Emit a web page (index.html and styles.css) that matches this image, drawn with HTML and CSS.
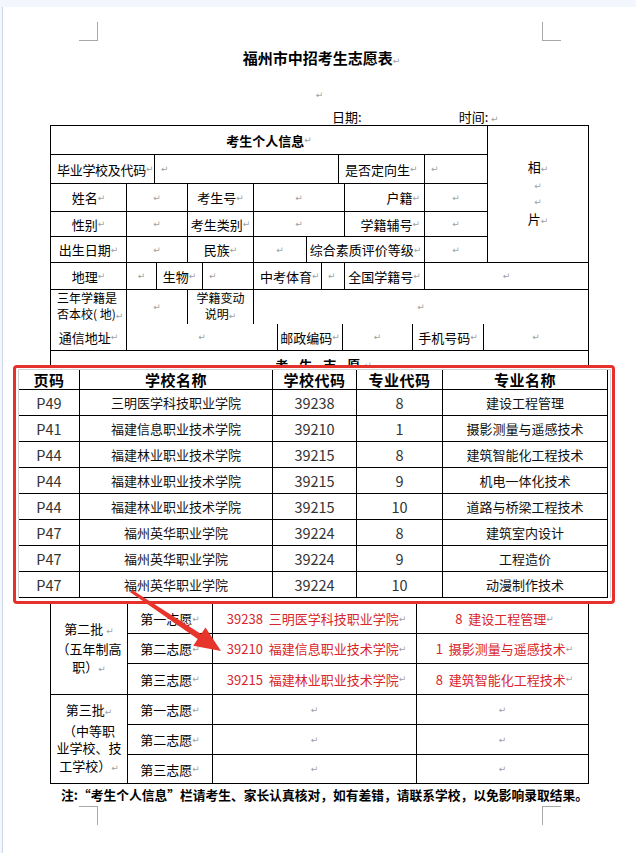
FILE: index.html
```html
<!DOCTYPE html>
<html lang="zh-CN">
<head>
<meta charset="utf-8">
<title>福州市中招考生志愿表</title>
<link rel="stylesheet" href="styles.css">
</head>
<body>
<div class="page">
  <span class="mark tl"></span><span class="mark tr"></span>
  <span class="mark bl"></span><span class="mark br"></span>

  <h1 class="title">福州市中招考生志愿表<span class="pm">↵</span></h1>
  <p class="blank"><span class="pm">↵</span></p>
  <p class="dateline"><span>日期:</span><span class="time">时间:<span class="pm"> ↵</span></span></p>

  <div class="info">
    <div class="top">
      <div class="left">
        <div class="c head">考生个人信息<span class="pm">↵</span></div>
        <div class="row r-school">
          <div class="c l tight">毕业学校及代码<span class="pm">↵</span></div>
          <div class="c l"><span class="pm">↵</span></div>
          <div class="c l">是否定向生<span class="pm">↵</span></div>
          <div class="c l"><span class="pm">↵</span></div>
        </div>
        <div class="row r-name">
          <div class="c">姓名<span class="pm">↵</span></div>
          <div class="c"><span class="pm">↵</span></div>
          <div class="c">考生号<span class="pm">↵</span></div>
          <div class="c"><span class="pm">↵</span></div>
          <div class="c r">户籍<span class="pm">↵</span></div>
          <div class="c"><span class="pm">↵</span></div>
        </div>
        <div class="row r-sex">
          <div class="c">性别<span class="pm">↵</span></div>
          <div class="c"><span class="pm">↵</span></div>
          <div class="c">考生类别<span class="pm">↵</span></div>
          <div class="c"><span class="pm">↵</span></div>
          <div class="c r">学籍辅号<span class="pm">↵</span></div>
          <div class="c"><span class="pm">↵</span></div>
        </div>
        <div class="row r-birth">
          <div class="c">出生日期<span class="pm">↵</span></div>
          <div class="c"><span class="pm">↵</span></div>
          <div class="c">民族<span class="pm">↵</span></div>
          <div class="c"><span class="pm">↵</span></div>
          <div class="c">综合素质评价等级<span class="pm">↵</span></div>
          <div class="c"><span class="pm">↵</span></div>
        </div>
      </div>
      <div class="c photo">
        <span>相<span class="pm">↵</span></span>
        <span class="pm">↵</span>
        <span class="pm">↵</span>
        <span>片<span class="pm">↵</span></span>
      </div>
    </div>
    <div class="row r-geo">
      <div class="c">地理<span class="pm">↵</span></div>
      <div class="c"><span class="pm">↵</span></div>
      <div class="c">生物<span class="pm">↵</span></div>
      <div class="c l"><span class="pm">↵</span></div>
      <div class="c l">中考体育<span class="pm">↵</span></div>
      <div class="c l"><span class="pm">↵</span></div>
      <div class="c">全国学籍号<span class="pm">↵</span></div>
      <div class="c"><span class="pm">↵</span></div>
    </div>
    <div class="row r-three">
      <div class="c l two"><span class="txt">三年学籍是<br>否本校( 地)<span class="pm">↵</span></span></div>
      <div class="c"><span class="pm">↵</span></div>
      <div class="c two"><span class="txt">学籍变动<br>说明<span class="pm">↵</span></span></div>
      <div class="c"><span class="pm">↵</span></div>
    </div>
    <div class="row r-addr">
      <div class="c">通信地址<span class="pm">↵</span></div>
      <div class="c"><span class="pm">↵</span></div>
      <div class="c">邮政编码<span class="pm">↵</span></div>
      <div class="c"><span class="pm">↵</span></div>
      <div class="c">手机号码<span class="pm">↵</span></div>
      <div class="c"><span class="pm">↵</span></div>
    </div>
    <div class="c wish">考 生 志 愿<span class="pm">↵</span></div>
    <div class="batch covered">
      <div class="c"></div><div class="c"></div><div class="c"></div><div class="c"></div>
      <div class="c"></div><div class="c"></div><div class="c"></div><div class="c"></div>
      <div class="c"></div><div class="c"></div><div class="c"></div><div class="c"></div>
    </div>
    <div class="batch b2">
      <div class="c lab"><span class="txt">第二批 <span class="pm">↵</span><br>（五年制高<br>职）<span class="pm">↵</span></span></div>
      <div class="c">第一志愿<span class="pm">↵</span></div>
      <div class="c red">39238&nbsp; 三明医学科技职业学院<span class="pm">↵</span></div>
      <div class="c red">8&nbsp; 建设工程管理<span class="pm">↵</span></div>
      <div class="c">第二志愿<span class="pm">↵</span></div>
      <div class="c red">39210&nbsp; 福建信息职业技术学院<span class="pm">↵</span></div>
      <div class="c red">1&nbsp; 摄影测量与遥感技术<span class="pm">↵</span></div>
      <div class="c">第三志愿<span class="pm">↵</span></div>
      <div class="c red">39215&nbsp; 福建林业职业技术学院<span class="pm">↵</span></div>
      <div class="c red">8&nbsp; 建筑智能化工程技术<span class="pm">↵</span></div>
    </div>
    <div class="batch b3">
      <div class="c lab"><span class="txt">第三批<span class="pm">↵</span><br>（中等职<br>业学校、技<br>工学校）<span class="pm">↵</span></span></div>
      <div class="c">第一志愿<span class="pm">↵</span></div>
      <div class="c"><span class="pm">↵</span></div>
      <div class="c"><span class="pm">↵</span></div>
      <div class="c">第二志愿<span class="pm">↵</span></div>
      <div class="c"><span class="pm">↵</span></div>
      <div class="c"><span class="pm">↵</span></div>
      <div class="c">第三志愿<span class="pm">↵</span></div>
      <div class="c"><span class="pm">↵</span></div>
      <div class="c"><span class="pm">↵</span></div>
    </div>
  </div>

  <p class="note">注:“考生个人信息”栏请考生、家长认真核对，如有差错，请联系学校，以免影响录取结果。</p>

  <div class="shot">
    <div class="sheet">
      <div class="grid">
        <div class="h">页码</div><div class="h">学校名称</div><div class="h">学校代码</div><div class="h">专业代码</div><div class="h">专业名称</div>
        <div class="n">P49</div><div class="t">三明医学科技职业学院</div><div class="n">39238</div><div class="n">8</div><div class="t">建设工程管理</div>
        <div class="n">P41</div><div class="t">福建信息职业技术学院</div><div class="n">39210</div><div class="n">1</div><div class="t">摄影测量与遥感技术</div>
        <div class="n">P44</div><div class="t">福建林业职业技术学院</div><div class="n">39215</div><div class="n">8</div><div class="t">建筑智能化工程技术</div>
        <div class="n">P44</div><div class="t">福建林业职业技术学院</div><div class="n">39215</div><div class="n">9</div><div class="t">机电一体化技术</div>
        <div class="n">P44</div><div class="t">福建林业职业技术学院</div><div class="n">39215</div><div class="n">10</div><div class="t">道路与桥梁工程技术</div>
        <div class="n">P47</div><div class="t">福州英华职业学院</div><div class="n">39224</div><div class="n">8</div><div class="t">建筑室内设计</div>
        <div class="n">P47</div><div class="t">福州英华职业学院</div><div class="n">39224</div><div class="n">9</div><div class="t">工程造价</div>
        <div class="n">P47</div><div class="t">福州英华职业学院</div><div class="n">39224</div><div class="n">10</div><div class="t">动漫制作技术</div>
      </div>
    </div>
  </div>
</div>

<svg class="arrow" width="636" height="853" viewBox="0 0 636 853" aria-hidden="true">
  <polygon points="131.8,589.8 201.1,634.1 205.5,627.4 221,651 193.3,645.8 197.7,639.1 130.2,592.2" fill="#e8352c"/>
</svg>
</body>
</html>
```

FILE: styles.css
```css
html, body {
  margin: 0;
  padding: 0;
}

body {
  background: #f3f6fc;
  font-family: "Noto Sans CJK SC", "Noto Sans", sans-serif;
  color: #000;
  position: relative;
  width: 636px;
  height: 853px;
  overflow: hidden;
}

.page {
  position: relative;
  margin: 7px 0 0 2px;
  border-left: 1px solid #cdd6e6;
  background: #fff;
  height: 846px;
}

.mark {
  position: absolute;
  width: 18px;
  height: 18px;
  border: 0 solid #a8a8a8;
}
.mark.tl { left: 76px; top: 15px; border-right-width: 1px; border-bottom-width: 1px; }
.mark.tr { left: 539px; top: 15px; border-left-width: 1px; border-bottom-width: 1px; }
.mark.bl { left: 76px; top: 799px; border-right-width: 1px; border-top-width: 1px; }
.mark.br { left: 539px; top: 799px; border-left-width: 1px; border-top-width: 1px; }

.pm {
  color: #a0a0a0;
  font-family: "DejaVu Sans", sans-serif;
  font-size: 9px;
  font-weight: 400;
  letter-spacing: 0;
}

.title {
  margin: 0 0 0 96px;
  padding-top: 41px;
  width: 445px;
  height: 20px;
  line-height: 20px;
  text-align: center;
  font-size: 15px;
  font-weight: 700;
}

.blank {
  margin: 13px 0 0 94px;
  width: 445px;
  height: 20px;
  line-height: 20px;
  text-align: center;
}

.dateline {
  margin: 8px 0 0 329px;
  height: 16px;
  line-height: 16px;
  font-size: 13px;
  display: flex;
}
.dateline .time { margin-left: 97px; }

.info {
  margin-left: 47px;
  width: 539px;
  box-sizing: border-box;
  padding: 1px;
  background: #000;
  display: flex;
  flex-direction: column;
  gap: 1px;
}

.c {
  background: #fff;
  display: flex;
  align-items: center;
  justify-content: center;
  font-size: 13px;
  white-space: nowrap;
}
.c.l { justify-content: flex-start; padding-left: 6px; }
.c.l.tight { padding-left: 6px; letter-spacing: -0.3px; }
.c.r { justify-content: flex-end; padding-right: 4px; }
.txt { display: block; }

.top {
  display: grid;
  grid-template-columns: 436px 100px;
  gap: 1px;
}
.left {
  display: flex;
  flex-direction: column;
  gap: 1px;
}
.head { height: 28px; font-weight: 700; }

.row { display: grid; gap: 1px; }
.r-school { grid-template-columns: 103px 183px 85px 62px; height: 28px; }
.r-name { grid-template-columns: 75px 60px 65px 90px 79px 62px; height: 27px; }
.r-sex { grid-template-columns: 75px 60px 65px 90px 79px 62px; height: 24px; }
.r-birth { grid-template-columns: 75px 60px 65px 52px 117px 62px; height: 25px; }
.r-geo { grid-template-columns: 75px 29px 45px 50px 67px 22px 79px 163px; height: 26px; }
.r-geo .c.l { padding-left: 6px; }
.r-three { grid-template-columns: 75px 60px 65px 334px; height: 33px; }
.r-addr { grid-template-columns: 75px 150px 64px 69px 70px 104px; height: 26px; }

.two {
  line-height: 15.5px;
  font-size: 12px;
  text-align: center;
}
.c.l.two { text-align: left; padding-left: 6px; }

.photo {
  flex-direction: column;
  line-height: 16.5px;
}

.wish {
  height: 27px;
  font-weight: 700;
  letter-spacing: 4px;
  padding-left: 8px;
}

.batch {
  display: grid;
  grid-template-columns: 76px 84px 203px 171px;
  gap: 1px;
}
.batch .lab {
  grid-row: span 3;
  text-align: center;
  line-height: 17.5px;
}
.covered { grid-template-rows: 74px 74px 74px; }
.b2 { grid-template-rows: 29px 29px 30px; }
.b3 { grid-template-rows: 29px 29px 28px; }
.red { color: #d8262b; padding-left: 4px; }

.note {
  margin: 2px 0 0 58px;
  font-size: 12.75px;
  font-weight: 700;
  line-height: 18px;
  white-space: nowrap;
}

.shot {
  position: absolute;
  left: 10px;
  top: 358px;
  width: 602px;
  height: 239px;
  box-sizing: border-box;
  border: 3px solid #e5312c;
  border-radius: 4px;
  background: #fff;
  padding: 1px 0 0 2px;
}

.sheet {
  width: 593px;
  box-sizing: border-box;
  border: 1px solid #d2d2d2;
  border-bottom: 0;
}

.grid {
  width: 589px;
  box-sizing: border-box;
  display: grid;
  grid-template-columns: 60px 192px 83px 85px 164px;
  grid-template-rows: 19px;
  grid-auto-rows: 25px;
  gap: 1px;
  padding: 0 1px 1px 0;
  background: #000;
}
.grid > div {
  background: #fff;
  display: flex;
  align-items: center;
  justify-content: center;
  white-space: nowrap;
}
.grid .h { font-size: 15px; font-weight: 700; letter-spacing: 0.5px; }
.grid .n { font-size: 14.5px; color: #333; }
.grid .t { font-size: 13px; color: #111; }

.arrow {
  position: absolute;
  left: 0;
  top: 0;
  pointer-events: none;
}
```
